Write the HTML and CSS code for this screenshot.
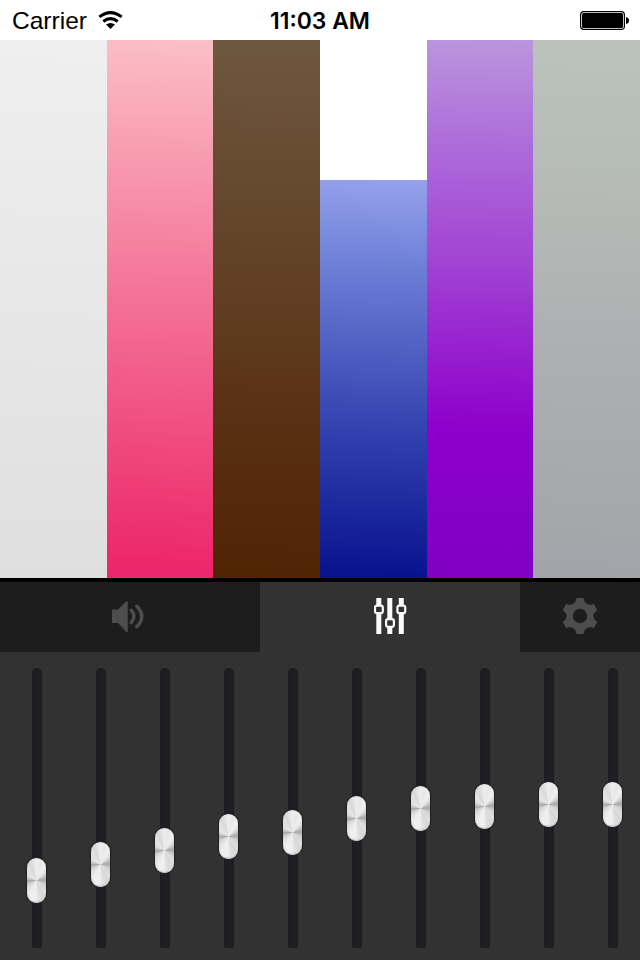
FILE: index.html
```html
<!DOCTYPE html>
<html lang="en">
<head>
<meta charset="utf-8">
<title>Equalizer</title>
<link rel="stylesheet" href="styles.css">
</head>
<body>
<header class="status">
  <div class="carrier">
    <svg class="carrier-text" width="78" height="30"><text x="0" y="22" textLength="75" lengthAdjust="spacingAndGlyphs">Carrier</text></svg>
    <svg class="wifi" width="26" height="20" viewBox="0 0 26 20" fill="none" stroke="#000" stroke-width="3.100">
      <path d="M2.300 6.900Q13.500-1.800 24.700 6.900"/>
      <path d="M6.300 11.500Q13.500 5.800 20.700 11.500"/>
      <path d="M9 14.600Q13.500 11.200 18 14.600L13.500 19Z" fill="#000" stroke="none"/>
    </svg>
  </div>
  <svg class="time" width="102" height="30"><text x="0" y="22" textLength="100" lengthAdjust="spacingAndGlyphs">11:03 AM</text></svg>
  <svg class="battery" width="50" height="20" viewBox="0 0 50 20">
    <rect x=".6" y=".6" width="43.800" height="17.800" rx="3.200" fill="none" stroke="#000" stroke-width="1.200"/>
    <rect x="2" y="2" width="41" height="15" rx="1.500"/>
    <path d="M46 6q3 .5 3 3.500t-3 3.500z"/>
  </svg>
</header>
<main class="bars">
  <div class="bar silver"></div>
  <div class="bar pink"></div>
  <div class="bar brown"></div>
  <div class="bar blue"></div>
  <div class="bar purple"></div>
  <div class="bar gray"></div>
</main>
<nav class="tabs">
  <div class="tab">
    <svg width="36" height="36" viewBox="0 0 36 36" fill="none" stroke="#4d4d4d" stroke-width="3.400" stroke-linecap="round">
      <path d="M2 11.500h6L16.500 3h1.200v31h-1.200L8 25H2z" fill="#4d4d4d" stroke="none"/>
      <path d="M21.200 12.200q5.400 6 0 12.400M26.800 8.200q10 10.400 0 20.600"/>
    </svg>
  </div>
  <div class="tab active">
    <svg width="36" height="36" viewBox="0 0 36 36">
      <path d="M2.500 0h5v36h-5zM13.500 0h5v36h-5zM25 0h5v36h-5z" transform="translate(-.2)" fill="#fafafa"/>
      <g fill="#323232" stroke="#fafafa" stroke-width="2.200">
        <rect x="1" y="7.600" width="7.800" height="7.600" rx="2"/>
        <rect x="12.100" y="21.200" width="7.800" height="7.600" rx="2"/>
        <rect x="23.400" y="7.600" width="7.800" height="7.600" rx="2"/>
      </g>
    </svg>
  </div>
  <div class="tab">
    <svg width="36" height="36" viewBox="-18 -18 36 36">
      <path fill="#4d4d4d" fill-rule="evenodd" d="M-3.500-18H3.500L4.600-14.200Q7.600-10.400 12-11.400L13.800-12L17.200-6L14.400-3.200Q12.200 0 14.400 3.200L17.200 6L13.800 12L12 11.400Q7.600 10.400 4.600 14.200L3.500 18H-3.500L-4.600 14.200Q-7.600 10.400-12 11.400L-13.800 12L-17.200 6L-14.400 3.200Q-12.200 0-14.400-3.200L-17.200-6L-13.800-12L-12-11.400Q-7.600-10.400-4.600-14.200ZM-7.200 0a7.200 7.200 0 1 0 14.400 0a7.200 7.200 0 1 0-14.400 0z"/>
    </svg>
  </div>
</nav>
<section class="mixer">
  <div class="track"><i class="thumb" style="top:190px"></i></div>
  <div class="track"><i class="thumb" style="top:174px"></i></div>
  <div class="track"><i class="thumb" style="top:160px"></i></div>
  <div class="track"><i class="thumb" style="top:146px"></i></div>
  <div class="track"><i class="thumb" style="top:142px"></i></div>
  <div class="track"><i class="thumb" style="top:128px"></i></div>
  <div class="track"><i class="thumb" style="top:118px"></i></div>
  <div class="track"><i class="thumb" style="top:116px"></i></div>
  <div class="track"><i class="thumb" style="top:114px"></i></div>
  <div class="track"><i class="thumb" style="top:114px"></i></div>
</section>
</body>
</html>
```
FILE: styles.css
```css
* { box-sizing: border-box; }

body {
  margin: 0;
  width: 640px;
  height: 960px;
  overflow: hidden;
  background: #fff;
  font-family: "Liberation Sans", Arial, sans-serif;
}

svg { display: block; }

.status {
  height: 40px;
  padding: 7px 10px 0 12px;
  display: grid;
  grid-template-columns: 258px 102px 1fr;
}

.carrier { display: flex; gap: 7px; }
.carrier-text { font-size: 24px; }
.wifi { margin-top: 3px; }
.time { font-family: Inter, "Liberation Sans", sans-serif; font-size: 23px; font-weight: 600; }
.battery { justify-self: end; margin-top: 4px; }

.bars {
  height: 538px;
  display: grid;
  grid-template-columns: 107px 106px 107px 107px 106px 107px;
  align-items: end;
}

.bar { height: 100%; }
.silver { background: linear-gradient(182deg, #efefef, #dfdfdf); }
.pink { background: linear-gradient(182deg, #fbbfc5, #f47699 45%, #ec266a 98%); }
.brown { background: linear-gradient(182deg, #6e5740, #5d391b 58%, #5c3317 64%, #502303); }
.blue { height: 398px; background: linear-gradient(182deg, #95a1eb, #6c7dd6 23%, #3343b0 62%, #08118e); }
.purple { background: linear-gradient(181deg, #bb95dd, #ad6bda 20%, #a142d3 42%, #8e00cc 72%, #7f00c4); }
.gray { background: linear-gradient(182deg, #bbc3bd, #b5bab6 30%, #acaeb0 61%, #a3a4a9); }

.tabs {
  height: 74px;
  border-top: 4px solid #000;
  display: grid;
  grid-template-columns: 260px 260px 120px;
  background: #1d1d1d;
}

.tab {
  display: flex;
  justify-content: center;
  padding-top: 16px;
}

.tab:first-child { padding-right: 4px; }
.active { background: #323232; padding-left: 4px; }

.mixer {
  height: 308px;
  padding: 16px 22px 0 32px;
  display: flex;
  justify-content: space-between;
  background: #323232;
}

.track {
  position: relative;
  width: 10px;
  height: 280px;
  border-radius: 5px 5px 3px 3px;
  background: #1e1f25;
  box-shadow: inset 0 0 1px 1px #1c1d20;
}

.thumb {
  position: absolute;
  left: -5px;
  width: 19px;
  height: 45px;
  border-radius: 9.5px;
  background: conic-gradient(#ededed 0deg, #e6e6e6 14deg, #f1f1f1 28deg, #e2e2e2 45deg, #c8c8c8 62deg, #adadad 78deg, #b0b0b0 94deg, #d0d0d0 115deg, #dedede 140deg, #d8d8d8 160deg, #dfdfdf 172deg, #f0f0f0 184deg, #eee 202deg, #e0e0e0 225deg, #cfcfcf 248deg, #a6a6a6 266deg, #c4c4c4 280deg, #e2e2e2 300deg, #e4e4e4 320deg, #d8d8d8 340deg, #ededed 360deg);
  box-shadow: 0 0 1px 1px #202123, inset 0 -1px 1px #bbb;
}
```
